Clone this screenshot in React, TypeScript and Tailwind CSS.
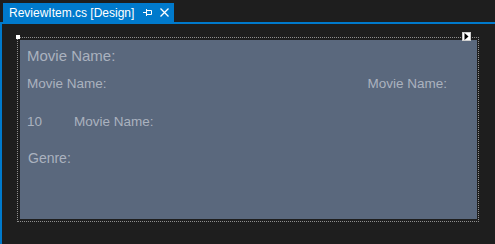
export default function App() {
  return (
    <div className="w-[495px] h-[244px] bg-[#1e1e1e] flex flex-col overflow-hidden font-['Liberation_Sans',Arial,sans-serif]">
      {/* Document tab strip */}
      <div className="h-[22px] flex items-end pl-[3px]">
        <div className="h-[19px] w-[171px] bg-[#007acc] flex items-center pl-[6px] text-white text-[12px] leading-none whitespace-nowrap">
          <span className="pt-[1px] shrink-0">ReviewItem.cs [Design]</span>
          <svg width="10" height="9" viewBox="0 0 10 9" className="ml-[9px] shrink-0" fill="none" stroke="white" strokeWidth="1">
            <path d="M0 4.5H3.5M3.5 1V8M3.5 2.5H8.5V6.5H3.5" />
          </svg>
          <svg width="9" height="9" viewBox="0 0 9 9" className="ml-[7px] shrink-0" fill="none" stroke="white" strokeWidth="1.3">
            <path d="M0.5 0.5L8.5 8.5M8.5 0.5L0.5 8.5" />
          </svg>
        </div>
      </div>
      <div className="h-[2px] bg-[#007acc]" />

      {/* Designer surface */}
      <div className="flex-1 border-l-2 border-[#007acc] pl-[15px] pt-[13px]">
        <div className="relative w-[462px] h-[185px] border border-dotted border-[#8f8f8f] pt-[2px] pl-[2px] pr-[1px] pb-[2px]">
          <div className="absolute left-[-2px] top-[-3px] w-[4px] h-[4px] bg-white" />
          <div className="absolute left-[444px] top-[-6px] w-[9px] h-[9px] bg-white border border-[#cfcfcf] flex items-center justify-center">
            <svg width="5" height="7" viewBox="0 0 5 7">
              <path d="M0.5 0L4.5 3.5L0.5 7Z" fill="black" />
            </svg>
          </div>

          <div className="h-full bg-[#5a687d] flex flex-col pt-[7px] px-[7px] text-[#aab2bf]">
            <div className="text-[15px] leading-[18px]">Movie Name:</div>
            <div className="mt-[11px] flex justify-between pr-[23px] text-[13.5px] leading-[16px]">
              <span>Movie Name:</span>
              <span>Movie Name:</span>
            </div>
            <div className="mt-[22px] flex text-[13.5px] leading-[16px]">
              <span className="w-[47px]">10</span>
              <span>Movie Name:</span>
            </div>
            <div className="mt-[20px] pl-[1px] text-[14px] leading-[17px]">Genre:</div>
          </div>
        </div>
      </div>
    </div>
  );
}
